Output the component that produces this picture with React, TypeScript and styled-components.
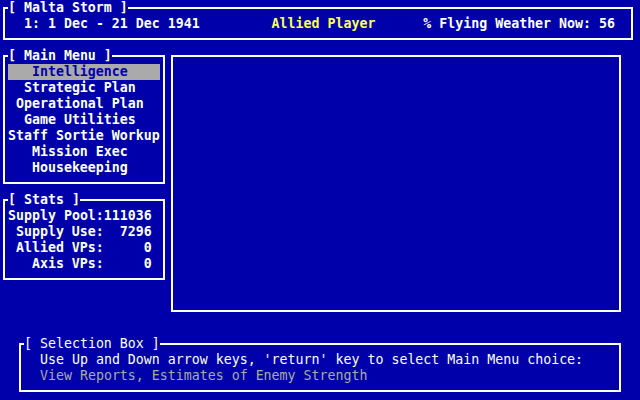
import React from 'react';
import styled, { createGlobalStyle } from 'styled-components';

const GlobalStyle = createGlobalStyle`
    html, body {
        margin: 0;
        padding: 0;
        background: #0000aa;
    }
    body {
        width: 640px;
        height: 400px;
        overflow: hidden;
    }
`;

const Screen = styled.div`
    width: 640px;
    height: 400px;
    background: #0000aa;
    color: #ffffff;
    font-family: 'DejaVu Sans Mono', 'Liberation Mono', monospace;
    font-size: 13.28px;
    line-height: 16px;
    font-weight: bold;
    display: flex;
    flex-direction: column;
`;

const Frame = styled.fieldset`
    box-sizing: border-box;
    margin: 0;
    padding: 0 0 6px 0;
    min-width: 0;
    border: 2px solid #ffffff;
`;

const Legend = styled.legend<{ $thin?: boolean }>`
    margin-left: 3px;
    padding: 0;
    line-height: 16px;
    white-space: pre;
    font-weight: ${(props) => (props.$thin ? 'normal' : 'bold')};
`;

const TopFrame = styled(Frame)`
    margin-left: 3px;
    width: 630px;
`;

const StatusRow = styled.div`
    display: grid;
    grid-template-columns: 31ch 19ch auto;
    padding-left: 19px;
    white-space: pre;
`;

const Player = styled.span`
    color: #ffff55;
`;

const MainRow = styled.div`
    display: flex;
    align-items: flex-start;
    margin-top: 8px;
    padding-left: 3px;
`;

const LeftColumn = styled.div`
    display: flex;
    flex-direction: column;
    gap: 8px;
    width: 162px;
`;

const SideFrame = styled(Frame)`
    width: 162px;
`;

const MenuList = styled.div`
    display: flex;
    flex-direction: column;
    padding-left: 3px;
`;

const MenuItem = styled.div<{ $active?: boolean; $indent: number }>`
    box-sizing: border-box;
    width: 19ch;
    height: 16px;
    padding-left: ${(props) => props.$indent}ch;
    white-space: pre;
    background: ${(props) => (props.$active ? '#aaaaaa' : 'transparent')};
    color: ${(props) => (props.$active ? '#0000aa' : '#ffffff')};
`;

const StatsGrid = styled.div`
    display: grid;
    grid-template-columns: 12ch 6ch;
    padding-left: 3px;
    white-space: pre;
`;

const StatLabel = styled.span`
    text-align: right;
`;

const StatValue = styled.span`
    text-align: right;
`;

const Pane = styled.div`
    box-sizing: border-box;
    width: 450px;
    height: 257px;
    margin: 7px 0 0 6px;
    border: 2px solid #ffffff;
`;

const SelectionFrame = styled(Frame)`
    margin: 24px 0 0 19px;
    width: 602px;
    font-weight: normal;
`;

const HelpLine = styled.div<{ $dim?: boolean }>`
    padding-left: 19px;
    height: 16px;
    white-space: pre;
    color: ${(props) => (props.$dim ? '#aaaaaa' : '#ffffff')};
`;

const menuItems = [
    'Intelligence',
    'Strategic Plan',
    'Operational Plan',
    'Game Utilities',
    'Staff Sortie Workup',
    'Mission Exec',
    'Housekeeping',
];

const stats = [
    { label: 'Supply Pool:', value: '111036' },
    { label: 'Supply Use:', value: '7296' },
    { label: 'Allied VPs:', value: '0' },
    { label: 'Axis VPs:', value: '0' },
];

const App = () => {
    const selected = 0;

    return (
        <>
            <GlobalStyle />
            <Screen>
                <TopFrame>
                    <Legend>[ Malta Storm ]</Legend>
                    <StatusRow>
                        <span>1: 1 Dec - 21 Dec 1941</span>
                        <Player>Allied Player</Player>
                        <span>% Flying Weather Now: 56</span>
                    </StatusRow>
                </TopFrame>

                <MainRow>
                    <LeftColumn>
                        <SideFrame>
                            <Legend>[ Main Menu ]</Legend>
                            <MenuList>
                                {menuItems.map((item, i) => (
                                    <MenuItem
                                        key={item}
                                        $active={i === selected}
                                        $indent={Math.floor((19 - item.length) / 2)}
                                    >
                                        {item}
                                    </MenuItem>
                                ))}
                            </MenuList>
                        </SideFrame>
                        <SideFrame>
                            <Legend>[ Stats ]</Legend>
                            <StatsGrid>
                                {stats.map((s) => (
                                    <React.Fragment key={s.label}>
                                        <StatLabel>{s.label}</StatLabel>
                                        <StatValue>{s.value}</StatValue>
                                    </React.Fragment>
                                ))}
                            </StatsGrid>
                        </SideFrame>
                    </LeftColumn>
                    <Pane />
                </MainRow>

                <SelectionFrame>
                    <Legend $thin>[ Selection Box ]</Legend>
                    <HelpLine>Use Up and Down arrow keys, 'return' key to select Main Menu choice:</HelpLine>
                    <HelpLine $dim>View Reports, Estimates of Enemy Strength</HelpLine>
                </SelectionFrame>
            </Screen>
        </>
    );
};

export default App;
